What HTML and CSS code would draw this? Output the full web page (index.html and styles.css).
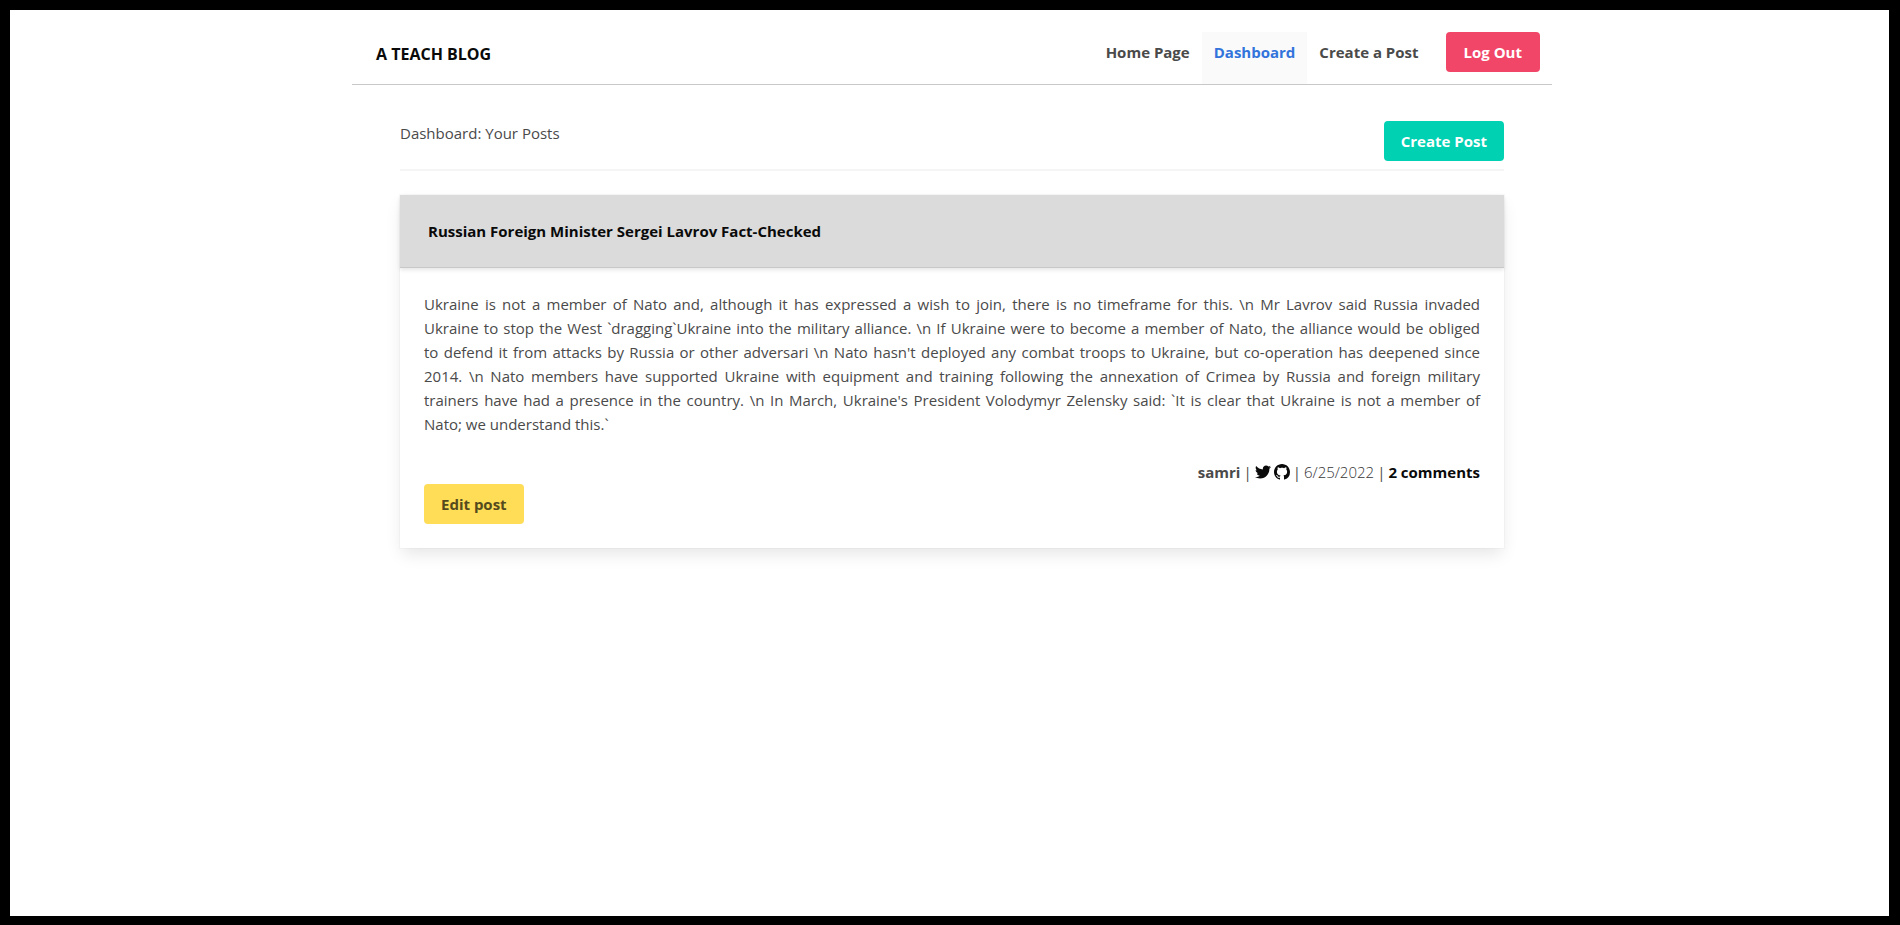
FILE: index.html
```
<!DOCTYPE html>
<html lang="en">
<head>
<meta charset="utf-8">
<title>A Teach Blog</title>
<link rel="stylesheet" href="styles.css">
</head>
<body>
<div class="container">
  <header class="navbar">
    <h1 class="brand">A TEACH BLOG</h1>
    <nav class="menu">
      <a class="menu-item" href="#">Home Page</a>
      <a class="menu-item is-active" href="#">Dashboard</a>
      <a class="menu-item" href="#">Create a Post</a>
      <button class="button is-danger" type="button">Log Out</button>
    </nav>
  </header>
  <main class="main">
    <div class="toolbar">
      <h2 class="toolbar-title">Dashboard: Your Posts</h2>
      <button class="button is-primary" type="button">Create Post</button>
    </div>
    <hr class="divider">
    <article class="card">
      <header class="card-header"><h3 class="card-title">Russian Foreign Minister Sergei Lavrov Fact-Checked</h3></header>
      <div class="card-content">
        <p class="post">Ukraine is not a member of Nato and, although it has expressed a wish to join, there is no timeframe for this. \n Mr Lavrov said Russia invaded Ukraine&nbsp;to stop the West `dragging`Ukraine into the military alliance. \n If Ukraine were to become a member of Nato, the alliance would be obliged to&nbsp;defend it from attacks by Russia or other adversari \n Nato hasn't deployed any combat troops to Ukraine, but co-operation has deepened since 2014.&nbsp;\n&nbsp;Nato members have supported Ukraine with equipment and training following the annexation of Crimea by Russia and foreign military trainers&nbsp;have&nbsp;had a presence in the country. \n In March, Ukraine's President Volodymyr Zelensky said: `It is clear that Ukraine is not a member of Nato;&nbsp;we&nbsp;understand this.`</p>
        <div class="meta">
          <strong>samri</strong>
          <span>|</span>
          <a class="icon" href="#" aria-label="Twitter"><svg viewBox="0 0 512 512"><path d="M459.37 151.716c.325 4.548.325 9.097.325 13.645 0 138.72-105.583 298.558-298.558 298.558-59.452 0-114.68-17.219-161.137-47.106 8.447.974 16.568 1.299 25.34 1.299 49.055 0 94.213-16.568 130.274-44.832-46.132-.975-84.792-31.188-98.112-72.772 6.498.974 12.995 1.624 19.818 1.624 9.421 0 18.843-1.3 27.614-3.573-48.081-9.747-84.143-51.98-84.143-102.985v-1.299c13.969 7.797 30.214 12.67 47.431 13.319-28.264-18.843-46.781-51.005-46.781-87.391 0-19.492 5.197-37.36 14.294-52.954 51.655 63.675 129.3 105.258 216.365 109.807-1.624-7.797-2.599-15.918-2.599-24.04 0-57.828 46.782-104.934 104.934-104.934 30.213 0 57.502 12.67 76.67 33.137 23.715-4.548 46.456-13.32 66.599-25.34-7.798 24.366-24.366 44.833-46.132 57.827 21.117-2.273 41.584-8.122 60.426-16.243-14.292 20.791-32.161 39.308-52.628 54.253z"/></svg></a>
          <a class="icon" href="#" aria-label="GitHub"><svg viewBox="0 0 16 16"><path d="M8 0C3.58 0 0 3.58 0 8c0 3.54 2.29 6.53 5.47 7.59.4.07.55-.17.55-.38 0-.19-.01-.82-.01-1.49-2.01.37-2.53-.49-2.69-.94-.09-.23-.48-.94-.82-1.13-.28-.15-.68-.52-.01-.53.63-.01 1.08.58 1.23.82.72 1.21 1.87.87 2.33.66.07-.52.28-.87.51-1.07-1.78-.2-3.64-.89-3.64-3.95 0-.87.31-1.59.82-2.15-.08-.2-.36-1.02.08-2.12 0 0 .67-.21 2.2.82.64-.18 1.32-.27 2-.27s1.36.09 2 .27c1.53-1.04 2.2-.82 2.2-.82.44 1.1.16 1.92.08 2.12.51.56.82 1.27.82 2.15 0 3.07-1.87 3.75-3.65 3.95.29.25.54.73.54 1.48 0 1.07-.01 1.93-.01 2.2 0 .21.15.46.55.38A8.01 8.01 0 0 0 16 8c0-4.42-3.58-8-8-8z"/></svg></a>
          <span>|</span>
          <time class="date" datetime="2022-06-25">6/25/2022</time>
          <span>|</span>
          <a class="comments" href="#">2 comments</a>
        </div>
        <button class="button is-warning" type="button">Edit post</button>
      </div>
    </article>
  </main>
</div>
</body>
</html>
```
FILE: styles.css
```
* { box-sizing: border-box; }
html { min-height: 100%; display: flex; background: #000; }
body {
  flex: 1;
  margin: 10px 11px 9px 10px;
  padding: 22px 0 0 5px;
  background: #fff;
  color: #4a4a4a;
  font: 400 15px/24px "Open Sans", "Noto Sans", sans-serif;
}
h1, h2, h3, p { margin: 0; font-size: inherit; }
a { color: inherit; text-decoration: none; }
.container { max-width: 1200px; margin: 0 auto; }
.navbar {
  display: flex;
  justify-content: space-between;
  min-height: 53px;
  padding: 0 12px 0 24px;
  border-bottom: 1px solid #c8c8c8;
}
.brand { padding-top: 10px; font-size: 16px; font-weight: 700; color: #0a0a0a; }
.menu { display: flex; align-items: flex-start; font-weight: 700; }
.menu-item { align-self: stretch; padding: 8px 12px; }
.menu-item.is-active { background: #fafafa; color: #3273dc; }
.button {
  height: 40px;
  padding: 0 17px;
  border: 0;
  border-radius: 4px;
  font: inherit;
  font-weight: 700;
  cursor: pointer;
}
.is-danger { margin-left: 15px; padding: 0 18px; background: #f14668; color: #fff; }
.is-primary { background: #00d1b2; color: #fff; }
.is-warning { background: #ffdd57; color: #554a1d; }
.main { padding: 36px 48px; }
.toolbar { display: flex; justify-content: space-between; align-items: flex-start; }
.toolbar-title { font-weight: 400; color: #4a4a4a; }
.divider { height: 2px; margin: 8px 0 24px; border: 0; background: #f5f5f5; }
.card { box-shadow: 0 8px 16px -2px rgba(10,10,10,.1), 0 0 0 1px rgba(10,10,10,.02); }
.card-header {
  padding: 24px 28px;
  background: #dbdbdb;
  border-bottom: 1px solid #c8c8c8;
  box-shadow: 0 2px 4px rgba(10,10,10,.1);
}
.card-title { font-weight: 700; color: #0a0a0a; }
.card-content { padding: 24px; }
.post { margin-bottom: 24px; text-align: justify; }
.meta { display: flex; justify-content: flex-end; gap: 3px; }
.icon { display: flex; align-items: center; color: #0a0a0a; }
.icon svg { width: 16px; height: 16px; fill: currentColor; }
.date { font-weight: 300; color: #363636; }
.comments { font-weight: 700; color: #0a0a0a; }
```
